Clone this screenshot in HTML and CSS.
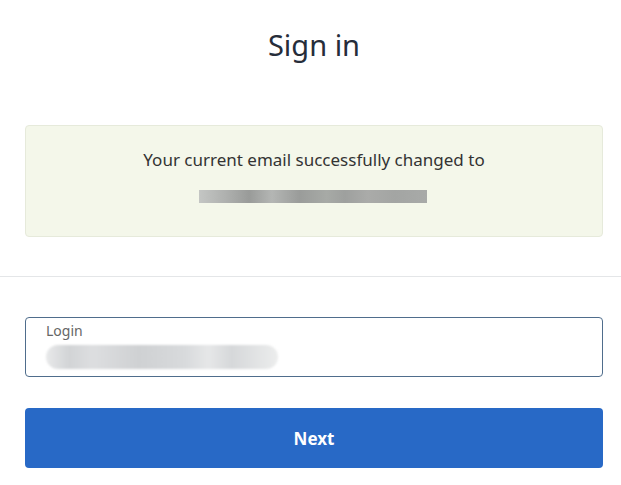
FILE: index.html
```html
<!DOCTYPE html>
<html lang="en">

<head>
    <meta charset="UTF-8">
    <meta name="viewport" content="width=device-width, initial-scale=1.0">
    <title>Sign in</title>
    <link rel="stylesheet" href="styles.css">
</head>

<body>

    <div class="page">
        <h1 class="title">Sign in</h1>

        <!-- Notice -->
        <div class="section">
            <div class="notice">
                <p>Your current email successfully changed to</p>
                <div class="blur-email"></div>
            </div>
        </div>

        <hr class="divider">

        <!-- Login form -->
        <form class="section login-form">
            <label class="field">
                <span class="field-label">Login</span>
                <span class="blur-value"></span>
            </label>

            <button type="submit" class="btn-next">Next</button>
        </form>
    </div>

</body>

</html>
```

FILE: styles.css
```css
/* General Styles */
* {
    margin: 0;
    padding: 0;
    box-sizing: border-box;
}

body {
    font-family: 'Noto Sans', 'Open Sans', sans-serif;
    background-color: #fff;
    color: #333;
}

.page {
    width: 100%;
}

.title {
    text-align: center;
    font-size: 29px;
    font-weight: 400;
    color: #262d3a;
    line-height: 34px;
    padding: 28px 0 0 7px;
    margin-bottom: 63px;
}

.section {
    padding: 0 18px 0 25px;
}

/* Notice box */
.notice {
    background-color: #f4f7ea;
    border: 1px solid #e6eadb;
    border-radius: 4px;
    height: 112px;
    padding-top: 22px;
    text-align: center;
}

.notice p {
    font-size: 17px;
    line-height: 24px;
    color: #333;
}

.blur-email {
    width: 228px;
    height: 13px;
    margin: 18px 0 0 173px;
    background: linear-gradient(90deg, #c4c6c4 0, #aeb0ae 12%, #999b99 22%, #b4b6b4 32%, #9a9c9a 44%, #a7aaa6 56%, #9ea09e 64%, #aaaba9 74%, #a3a5a3 86%, #a8aaa8 100%);
    filter: blur(0.6px);
}

.divider {
    border: none;
    border-top: 1px solid #e4e6e8;
    margin: 39px 0 40px;
}

/* Login form */
.login-form {
    display: flex;
    flex-direction: column;
    gap: 31px;
}

.field {
    display: flex;
    flex-direction: column;
    height: 60px;
    border: 1px solid #4f6d8c;
    border-radius: 4px;
    padding: 3px 20px 0;
}

.field-label {
    font-size: 14px;
    line-height: 20px;
    color: #666;
}

.blur-value {
    display: block;
    width: 232px;
    height: 24px;
    margin-top: 4px;
    border-radius: 12px;
    background: linear-gradient(90deg, #e8e9ea 0, #d2d4d6 10%, #dddee0 20%, #cfd1d3 40%, #d8dadc 60%, #e6e7e8 70%, #d6d8da 80%, #eceded 100%);
    filter: blur(1px);
}

.btn-next {
    height: 60px;
    background-color: #2869c6;
    color: #fff;
    border: none;
    border-radius: 4px;
    font-family: inherit;
    font-size: 17px;
    font-weight: 700;
    cursor: pointer;
}
```
